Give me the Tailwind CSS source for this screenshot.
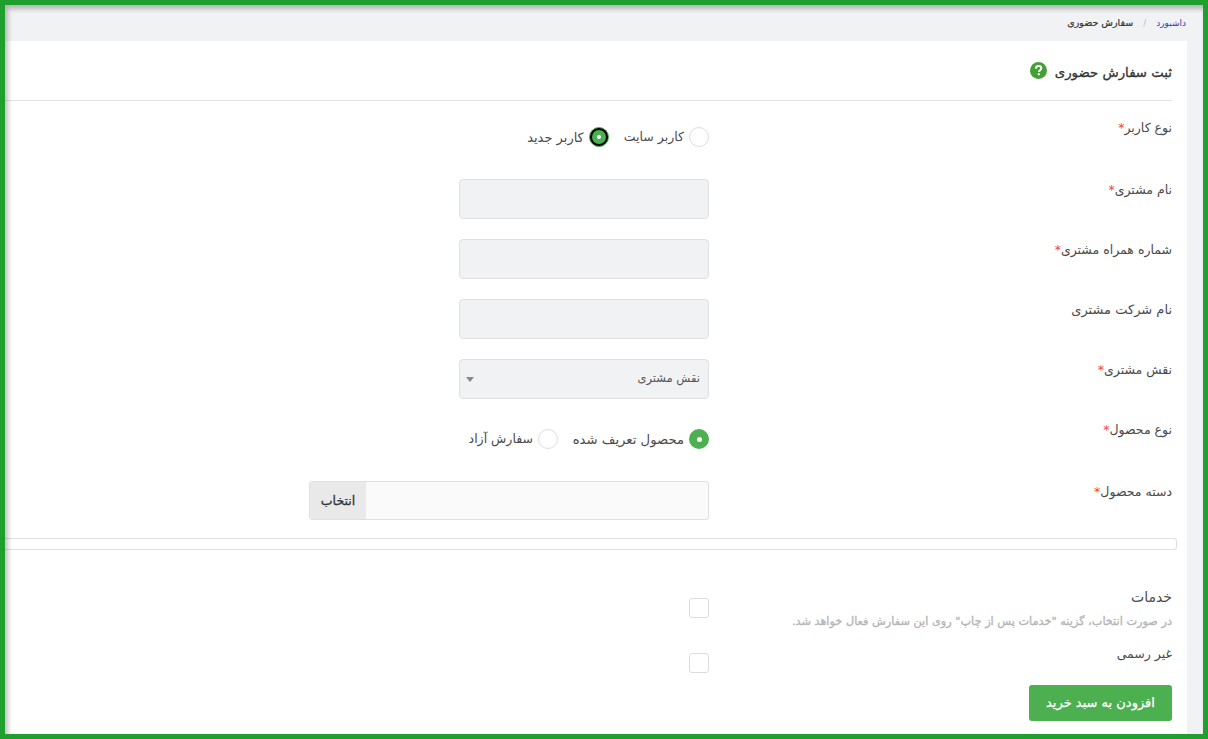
<!doctype html>
<html lang="fa" dir="rtl">
<head>
    <meta charset="UTF-8">
    <title>ثبت سفارش حضوری</title>
    <script src="https://cdn.jsdelivr.net/npm/@tailwindcss/browser@4"></script>
</head>
<body class="h-[739px] w-[1208px] overflow-hidden bg-[#f1f2f4] font-['DejaVu_Sans',sans-serif] text-[#4a4a4a]">
    <div class="relative h-[739px] w-[1208px] overflow-hidden border-[5px] border-[#1f9f2e] bg-[#f1f2f4] pr-[16px]">
        <!-- breadcrumb -->
        <div class="flex h-[36px] items-center pr-[1px] pt-[1px] text-[9px] text-[#333]">
            <a class="text-[#3a3ac0]">داشبورد</a>
            <span class="mx-[10px] text-[#bbb]">/</span>
            <span class="text-[9.5px] [-webkit-text-stroke:0.2px_#333]">سفارش حضوری</span>
        </div>

        <!-- card -->
        <div class="h-[700px] w-[1182px] bg-white">
            <div class="mr-[15px] flex h-[60px] items-center gap-[8px] border-b border-[#e2e2e2] pt-[5px]">
                <h1 class="text-[13.3px] text-[#333] [-webkit-text-stroke:0.3px_#333]">ثبت سفارش حضوری</h1>
                <svg class="mb-[3px] mt-[-3px] h-[17px] w-[17px]" viewBox="0 0 17 17">
                    <circle cx="8.5" cy="8.5" r="8.5" fill="#43a035"/>
                    <path d="M5.8 6.6c.1-1.7 1.3-2.6 2.8-2.6s2.7.9 2.7 2.3c0 1-.6 1.6-1.4 2.1-.7.5-1 .8-1 1.6" fill="none" stroke="#fff" stroke-width="1.9"/>
                    <rect x="7.8" y="11.2" width="2" height="2" fill="#fff"/>
                </svg>
            </div>

            <!-- user type -->
            <div class="mt-[16px] flex h-[62px] items-start pr-[15px] text-[12.5px]">
                <label class="h-[20px] w-[463px] pt-[1px] leading-[20px]">نوع کاربر<span class="text-[#f44336]">*</span></label>
                <div class="mt-[10px] flex h-[20px] items-center">
                    <span class="h-[20px] w-[20px] rounded-full border border-[#ddd] bg-white"></span>
                    <span class="ml-[15px] mr-[5px] pt-[1px]">کاربر سایت</span>
                    <span class="flex h-[20px] w-[20px] items-center justify-center rounded-full border border-[#4caf50] bg-black">
                        <span class="flex h-[14px] w-[14px] items-center justify-center rounded-full bg-[#4caf50]">
                            <span class="h-[4px] w-[4px] rounded-full bg-white"></span>
                        </span>
                    </span>
                    <span class="mr-[5px] pt-[1px] text-[13px]">کاربر جدید</span>
                </div>
            </div>

            <!-- customer fields -->
            <div class="flex h-[60px] items-start pr-[15px] text-[12.5px]">
                <label class="h-[20px] w-[463px] pt-[1px] leading-[20px]">نام مشتری<span class="text-[#f44336]">*</span></label>
                <input type="text" class="h-[40px] w-[250px] rounded-[4px] border border-[#e0e0e0] bg-[#f1f2f4]">
            </div>
            <div class="flex h-[60px] items-start pr-[15px] text-[12.5px]">
                <label class="h-[20px] w-[463px] pt-[1px] leading-[20px]">شماره همراه مشتری<span class="text-[#f44336]">*</span></label>
                <input type="text" class="h-[40px] w-[250px] rounded-[4px] border border-[#e0e0e0] bg-[#f1f2f4]">
            </div>
            <div class="flex h-[60px] items-start pr-[15px] text-[12.5px]">
                <label class="h-[20px] w-[463px] pt-[1px] text-[13px] leading-[20px]">نام شرکت مشتری</label>
                <input type="text" class="h-[40px] w-[250px] rounded-[4px] border border-[#e0e0e0] bg-[#f1f2f4]">
            </div>
            <div class="flex h-[60px] items-start pr-[15px] text-[12.5px]">
                <label class="h-[20px] w-[463px] pt-[1px] leading-[20px]">نقش مشتری<span class="text-[#f44336]">*</span></label>
                <div class="flex h-[40px] w-[250px] items-center justify-between rounded-[4px] border border-[#e0e0e0] bg-[#f1f2f4] pl-[6px] pr-[8px] text-[11.5px] text-[#555]">
                    <span>نقش مشتری</span>
                    <span class="h-0 w-0 border-x-[4px] border-t-[5px] border-x-transparent border-t-[#888]"></span>
                </div>
            </div>

            <!-- product type -->
            <div class="flex h-[62px] items-start pr-[15px] text-[12.5px]">
                <label class="h-[20px] w-[463px] pt-[1px] leading-[20px]">نوع محصول<span class="text-[#f44336]">*</span></label>
                <div class="mt-[10px] flex h-[20px] items-center">
                    <span class="flex h-[20px] w-[20px] items-center justify-center rounded-full bg-[#4caf50]">
                        <span class="h-[5px] w-[5px] rounded-full bg-white"></span>
                    </span>
                    <span class="ml-[14px] mr-[5px] w-[112px] whitespace-nowrap pt-[1px] text-[13.2px]">محصول تعریف شده</span>
                    <span class="h-[20px] w-[20px] rounded-full border border-[#ddd] bg-white"></span>
                    <span class="mr-[5px] pt-[1px]">سفارش آزاد</span>
                </div>
            </div>

            <!-- category -->
            <div class="flex h-[57px] items-start pr-[15px] text-[12.5px]">
                <label class="h-[20px] w-[463px] pt-[1px] leading-[20px]">دسته محصول<span class="text-[#f44336]">*</span></label>
                <div class="flex h-[39px] w-[400px] overflow-hidden rounded-[3px] border border-[#e0e0e0] bg-[#fafafa]">
                    <div class="flex-1"></div>
                    <div class="flex w-[56px] items-center justify-center bg-[#e9e9e9] pt-[1px] text-[12.5px] text-[#333] [-webkit-text-stroke:0.3px_#333]">انتخاب</div>
                </div>
            </div>

            <!-- empty box -->
            <div class="mr-[10px] h-[12px] w-[1172px] rounded-r-[3px] border border-l-0 border-[#e0e0e0]"></div>

            <!-- options -->
            <div class="mt-[37px] flex h-[56px] items-start pr-[15px] text-[12.5px]">
                <div class="w-[463px]">
                    <label class="block h-[20px] text-[14px] leading-[20px]">خدمات</label>
                    <p class="mt-[7px] text-[11.3px] leading-[16px] text-[#b5b5b5] [-webkit-text-stroke:0.3px_#b5b5b5]">در صورت انتخاب، گزینه "خدمات پس از چاپ" روی این سفارش فعال خواهد شد.</p>
                </div>
                <span class="mt-[11px] h-[20px] w-[20px] rounded-[3px] border border-[#ddd] bg-white"></span>
            </div>
            <div class="flex h-[42px] items-start pr-[15px] text-[12.5px]">
                <label class="h-[20px] w-[463px] pt-[1px] leading-[20px]">غیر رسمی</label>
                <span class="mt-[10px] h-[20px] w-[20px] rounded-[3px] border border-[#ddd] bg-white"></span>
            </div>
            <div class="pr-[15px]">
                <button class="h-[36px] w-[143px] rounded-[3px] bg-[#4caf50] text-[13px] text-white [-webkit-text-stroke:0.25px_#fff]">افزودن به سبد خرید</button>
            </div>
        </div>

        <!-- inner shadow of the frame -->
        <div class="pointer-events-none absolute inset-0 shadow-[inset_3px_4px_5px_rgba(0,0,0,0.25)]"></div>
    </div>
</body>
</html>
